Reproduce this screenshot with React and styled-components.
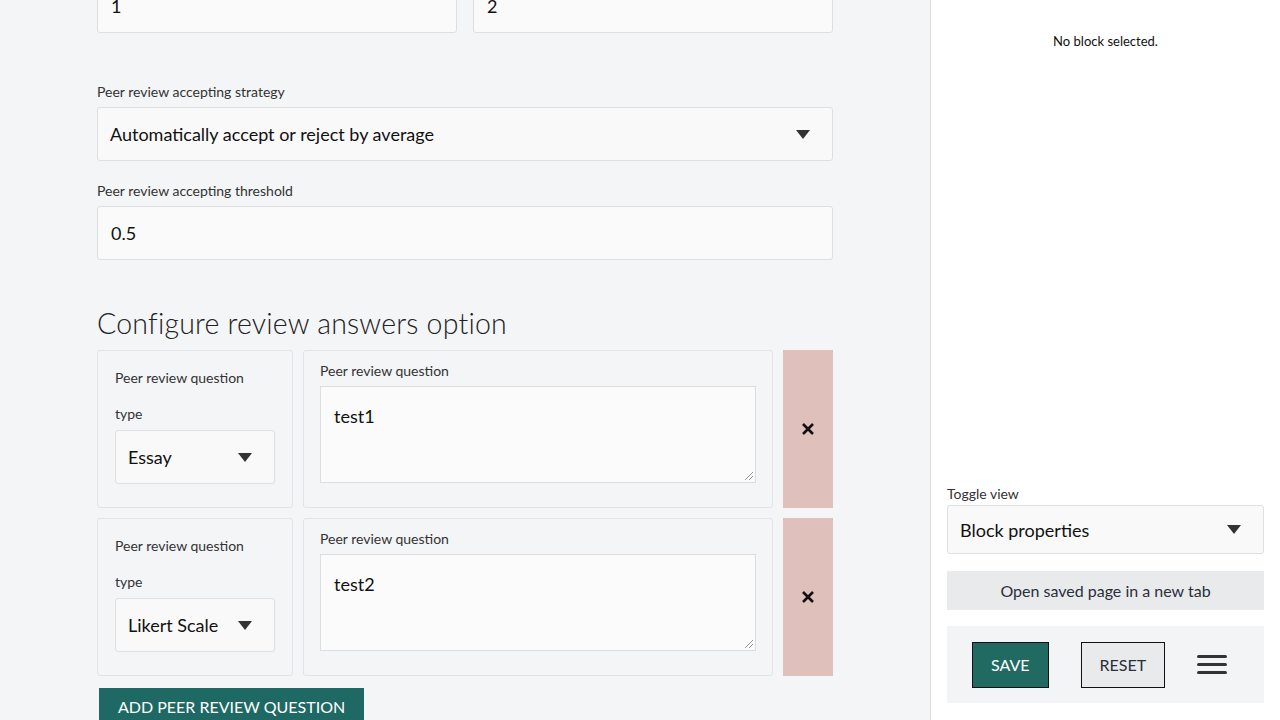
import React from "react";
import styled, { createGlobalStyle } from "styled-components";

const GlobalStyle = createGlobalStyle`
  html, body {
    margin: 0;
    padding: 0;
    height: 720px;
    overflow: hidden;
  }
  body {
    font-family: Lato, "Open Sans", sans-serif;
    color: #1d1f22;
  }
`;

const Layout = styled.div`
  display: flex;
  width: 1280px;
  height: 720px;
  overflow: hidden;
`;

const Main = styled.main`
  width: 930px;
  height: 720px;
  background: #f4f5f7;
  overflow: hidden;
`;

const Content = styled.div`
  width: 736px;
  margin: -21px 0 0 97px;
  display: flex;
  flex-direction: column;
`;

const TwoCols = styled.div`
  display: grid;
  grid-template-columns: 1fr 1fr;
  gap: 16px;
`;

const Field = styled.div`
  display: flex;
  flex-direction: column;
  margin-top: ${(p) => p.$top || 0}px;
`;

const Label = styled.label`
  font-size: 14px;
  color: #333;
  line-height: 16px;
  margin-bottom: 7px;
`;

const TextBox = styled.div`
  box-sizing: border-box;
  height: ${(p) => p.$h || 54}px;
  padding: 0 13px;
  display: flex;
  align-items: center;
  background: #fafafa;
  border: 1px solid #dedfe1;
  border-radius: 3px;
  font-size: 18px;
  color: #111;
`;

const SelectBox = styled(TextBox)`
  justify-content: space-between;
  background: #f9f9f9;
  padding: 0 22px 0 12px;
`;

const Caret = styled.span`
  width: 0;
  height: 0;
  border-left: 7.5px solid transparent;
  border-right: 7.5px solid transparent;
  border-top: 9px solid #333;
`;

const Heading = styled.h2`
  font-family: Lato, sans-serif;
  font-weight: 300;
  font-size: 28.5px;
  letter-spacing: 0.2px;
  color: #222;
  margin: 43px 0 7px;
  line-height: 40px;
`;

const QuestionRow = styled.div`
  display: grid;
  grid-template-columns: 196px 1fr 50px;
  gap: 10px;
  height: 158px;
  margin-bottom: 10px;
`;

const Card = styled.div`
  box-sizing: border-box;
  border: 1px solid #e1e3e6;
  border-radius: 3px;
  display: flex;
  flex-direction: column;
  padding: ${(p) => p.$pad};
`;

const TypeLabel = styled.div`
  font-size: 14px;
  color: #333;
  line-height: 16px;
  margin-bottom: ${(p) => p.$mb}px;
`;

const TextArea = styled.div`
  position: relative;
  box-sizing: border-box;
  height: 97px;
  background: #fbfbfb;
  border: 1px solid #dcdddf;
  padding: 17px 13px;
  font-size: 18px;
  color: #111;
  line-height: 24px;
  &::after {
    content: "";
    position: absolute;
    right: 2px;
    bottom: 2px;
    width: 8px;
    height: 8px;
    background: linear-gradient(
      135deg,
      transparent 45%,
      #999 45%,
      #999 52%,
      transparent 52%,
      transparent 70%,
      #999 70%,
      #999 77%,
      transparent 77%
    );
  }
`;

const RemoveButton = styled.button`
  border: none;
  background: #e0c0bb;
  display: flex;
  align-items: center;
  justify-content: center;
  padding: 0;
  cursor: pointer;
`;

const AddButton = styled.button`
  align-self: flex-start;
  margin: 2px 0 0 2px;
  height: 44px;
  padding: 9px 19px 0;
  border: none;
  background: #1f6964;
  color: #fff;
  font-family: Lato, sans-serif;
  font-size: 16px;
  display: flex;
  align-items: flex-start;
`;

const Sidebar = styled.aside`
  box-sizing: border-box;
  width: 350px;
  height: 720px;
  background: #fff;
  border-left: 1px solid #dcdcdc;
  padding: 0 16px 17px;
  display: flex;
  flex-direction: column;
`;

const Empty = styled.div`
  text-align: center;
  font-size: 13px;
  color: #111;
  margin-top: 33px;
  flex: 1;
`;

const SideLabel = styled(Label)`
  margin-bottom: 3px;
`;

const SideSelect = styled(SelectBox)`
  height: 49px;
  flex-shrink: 0;
`;

const OpenButton = styled.button`
  margin-top: 17px;
  height: 39px;
  flex-shrink: 0;
  border: none;
  background: #e9eaec;
  font-family: Lato, sans-serif;
  font-size: 16px;
  color: #2a2f3a;
`;

const ActionBar = styled.div`
  margin-top: 16px;
  height: 77px;
  flex-shrink: 0;
  background: #f3f4f6;
  display: flex;
  align-items: center;
  padding: 0 24px 0 25px;
  gap: 32px;
`;

const ActionButton = styled.button`
  box-sizing: border-box;
  height: 46px;
  padding: 0 18px;
  border: 1px solid #111;
  background: ${(p) => (p.$primary ? "#216a62" : "#e9eaec")};
  color: ${(p) => (p.$primary ? "#fff" : "#2a2f3a")};
  font-family: Lato, sans-serif;
  font-size: 16px;
`;

const MenuIcon = styled.span`
  display: flex;
  flex-direction: column;
  gap: 5px;
  span {
    display: block;
    width: 30px;
    height: 3px;
    border-radius: 2px;
    background: #333;
  }
`;

const questions = [
  { type: "Essay", text: "test1" },
  { type: "Likert Scale", text: "test2" },
];

const CloseIcon = () => (
  <svg width="14" height="14" viewBox="0 0 14 14">
    <path d="M2 2L12 12M12 2L2 12" stroke="#111" strokeWidth="2.6" />
  </svg>
);

export default function App() {
  return (
    <>
      <GlobalStyle />
      <Layout>
        <Main>
          <Content>
            <TwoCols>
              <TextBox>1</TextBox>
              <TextBox>2</TextBox>
            </TwoCols>
            <Field $top={51}>
              <Label>Peer review accepting strategy</Label>
              <SelectBox>
                Automatically accept or reject by average
                <Caret />
              </SelectBox>
            </Field>
            <Field $top={22}>
              <Label>Peer review accepting threshold</Label>
              <TextBox>0.5</TextBox>
            </Field>
            <Heading>Configure review answers option</Heading>
            {questions.map((q) => (
              <QuestionRow key={q.text}>
                <Card $pad="19px 17px 0">
                  <TypeLabel $mb={20}>Peer review question</TypeLabel>
                  <TypeLabel $mb={8}>type</TypeLabel>
                  <SelectBox>
                    {q.type}
                    <Caret />
                  </SelectBox>
                </Card>
                <Card $pad="12px 16px 0">
                  <TypeLabel $mb={7}>Peer review question</TypeLabel>
                  <TextArea>{q.text}</TextArea>
                </Card>
                <RemoveButton aria-label="remove">
                  <CloseIcon />
                </RemoveButton>
              </QuestionRow>
            ))}
            <AddButton>ADD PEER REVIEW QUESTION</AddButton>
          </Content>
        </Main>
        <Sidebar>
          <Empty>No block selected.</Empty>
          <SideLabel>Toggle view</SideLabel>
          <SideSelect>
            Block properties
            <Caret />
          </SideSelect>
          <OpenButton>Open saved page in a new tab</OpenButton>
          <ActionBar>
            <ActionButton $primary>SAVE</ActionButton>
            <ActionButton>RESET</ActionButton>
            <MenuIcon>
              <span />
              <span />
              <span />
            </MenuIcon>
          </ActionBar>
        </Sidebar>
      </Layout>
    </>
  );
}
